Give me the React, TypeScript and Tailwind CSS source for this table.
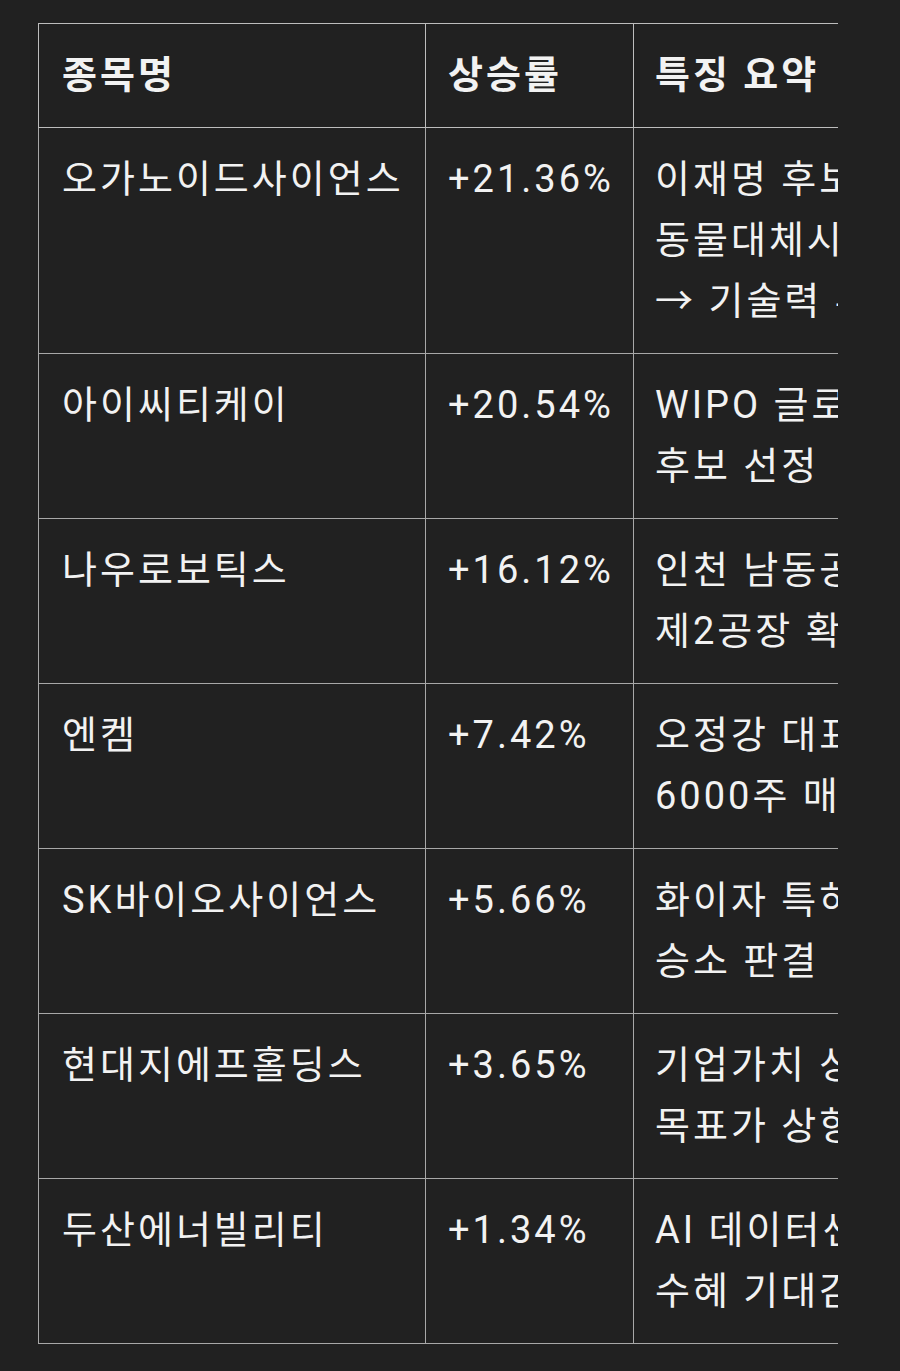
import React from "react";

const rows: { name: string; rate: string; lines: string[] }[] = [
  { name: "오가노이드사이언스", rate: "+21.36%", lines: ["이재명 후보 공약 수혜 기대", "동물대체시험법 관련", "→ 기술력 부각"] },
  { name: "아이씨티케이", rate: "+20.54%", lines: ["WIPO 글로벌 어워드 최종", "후보 선정"] },
  { name: "나우로보틱스", rate: "+16.12%", lines: ["인천 남동공단 부지 매입", "제2공장 확보"] },
  { name: "엔켐", rate: "+7.42%", lines: ["오정강 대표 자사주", "6000주 매수"] },
  { name: "SK바이오사이언스", rate: "+5.66%", lines: ["화이자 특허 소송", "승소 판결"] },
  { name: "현대지에프홀딩스", rate: "+3.65%", lines: ["기업가치 상승 기대", "목표가 상향"] },
  { name: "두산에너빌리티", rate: "+1.34%", lines: ["AI 데이터센터 전력", "수혜 기대감"] },
];

export default function App() {
  return (
    <div
      className="min-h-[1371px] w-full bg-[#212121] pt-[23px] pl-[38px] text-[#f2f2f2]"
      style={{ fontFamily: 'Roboto, "Noto Sans CJK KR", sans-serif' }}
    >
      <div className="w-[800px] overflow-hidden">
        <table className="w-[1215px] table-fixed border-collapse text-[38px] leading-[61px] tracking-[3px]">
          <colgroup>
            <col className="w-[387px]" />
            <col className="w-[208px]" />
            <col className="w-[620px]" />
          </colgroup>
          <thead>
            <tr>
              <th className="border border-[#bdbdbd] px-[23px] py-[21px] text-left align-top font-bold">종목명</th>
              <th className="border border-[#bdbdbd] px-[22px] py-[21px] text-left align-top font-bold">상승률</th>
              <th className="border border-[#bdbdbd] px-[21px] py-[21px] text-left align-top font-bold">특징 요약</th>
            </tr>
          </thead>
          <tbody>
            {rows.map((r) => (
              <tr key={r.name}>
                <td className="border border-[#a8a8a8] px-[23px] py-[21px] align-top whitespace-nowrap">{r.name}</td>
                <td className="border border-[#a8a8a8] px-[22px] py-[21px] align-top whitespace-nowrap">{r.rate}</td>
                <td className="border border-[#a8a8a8] px-[21px] py-[21px] align-top">
                  {r.lines.map((l) => (
                    <div key={l} className="whitespace-nowrap">{l}</div>
                  ))}
                </td>
              </tr>
            ))}
          </tbody>
        </table>
      </div>
    </div>
  );
}
